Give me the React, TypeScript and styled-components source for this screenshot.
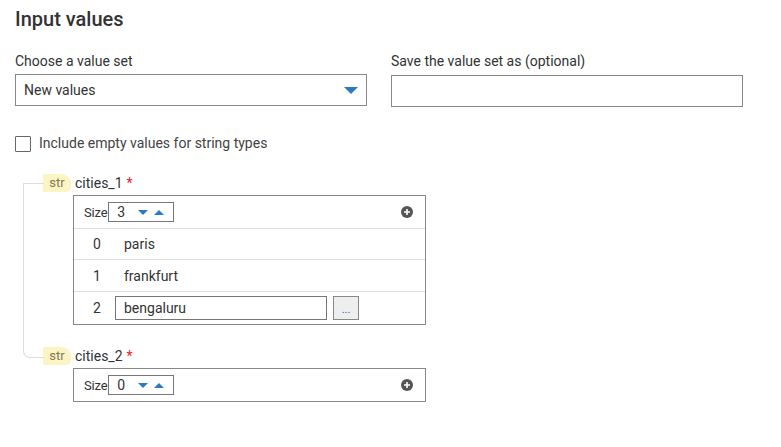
import React from "react";
import styled, { createGlobalStyle, css } from "styled-components";

const GlobalStyle = createGlobalStyle`
  html, body { margin: 0; padding: 0; background: #fff; }
  body { font-family: Roboto, "Liberation Sans", sans-serif; color: #333; }
  * { box-sizing: border-box; }
`;

const Page = styled.div`
  padding: 0 15px;
  width: 781px;
`;

const Title = styled.h1`
  margin: 0;
  padding-top: 7px;
  font-size: 20px;
  line-height: 24px;
  font-weight: 500;
  color: #333;
`;

const FormRow = styled.div`
  display: grid;
  grid-template-columns: 352px 352px;
  column-gap: 24px;
  margin-top: 20px;
`;

const Field = styled.div`
  display: flex;
  flex-direction: column;
`;

const Label = styled.label`
  font-size: 14px;
  line-height: 20px;
  color: #333;
  margin-bottom: 3px;
`;

const SelectBox = styled.div`
  height: 32px;
  border: 1px solid #888;
  display: flex;
  align-items: center;
  padding: 0 8px 0 8px;
  font-size: 14px;
  color: #333;
  justify-content: space-between;
`;

const TextBox = styled.div`
  height: 32px;
  margin-top: 1px;
  border: 1px solid #888;
`;

const CheckRow = styled.div`
  display: flex;
  align-items: flex-start;
  height: 20px;
  margin-top: 26px;
  gap: 8px;
  font-size: 14px;
  line-height: 20px;
  color: #444;
`;

const CheckBox = styled.span`
  width: 16px;
  height: 16px;
  margin-top: 3px;
  border: 1px solid #666;
  border-radius: 1px;
  background: #fff;
`;

const Tree = styled.div`
  margin-top: 21px;
  margin-left: 8px;
`;

const TreeItem = styled.div<{ $last?: boolean }>`
  position: relative;
  padding-left: 20px;
  padding-bottom: ${(p) => (p.$last ? 0 : 22)}px;
  &::before {
    content: "";
    position: absolute;
    left: 0;
    width: 20px;
    border-left: 1px solid #ddd;
    ${(p) =>
      p.$last
        ? css`
            top: 0;
            height: 10px;
            border-bottom: 1px solid #ddd;
            border-bottom-left-radius: 7px;
          `
        : css`
            top: 9px;
            bottom: 0;
            border-top: 1px solid #ddd;
          `}
  }
`;

const ItemHeader = styled.div`
  display: flex;
  align-items: center;
  height: 18px;
  gap: 4px;
`;

const TypeBadge = styled.span`
  width: 28px;
  height: 18px;
  background: #fdf4c4;
  color: #85775a;
  font-size: 13px;
  line-height: 18px;
  text-align: center;
  border-radius: 0 9px 5px 0;
`;

const ItemName = styled.span`
  font-size: 14px;
  line-height: 16px;
  color: #333;
`;

const Required = styled.span`
  color: #e8202a;
  margin-left: 4px;
`;

const ListBox = styled.div`
  margin-left: 30px;
  margin-top: 3px;
  width: 353px;
  border: 1px solid #888;
`;

const SizeRow = styled.div`
  display: flex;
  align-items: center;
  height: 32px;
  padding: 0 12px 0 10px;
`;

const SizeLabel = styled.span`
  font-size: 13px;
  color: #333;
  letter-spacing: -0.2px;
`;

const SizeInput = styled.div`
  display: flex;
  align-items: center;
  width: 66px;
  height: 20px;
  margin-left: 1px;
  border: 1px solid #777;
  padding: 0 8px;
  font-size: 14px;
  color: #333;
`;

const SizeValue = styled.span`
  flex: 1;
`;

const Spinner = styled.span`
  display: flex;
  align-items: center;
  gap: 6px;
  margin-right: 1px;
`;

const AddButton = styled.span`
  margin-left: auto;
  display: flex;
`;

const Row = styled.div<{ $h: number }>`
  display: flex;
  align-items: center;
  height: ${(p) => p.$h}px;
  border-top: 1px solid #ddd;
`;

const Index = styled.span`
  width: 41px;
  padding-left: 5px;
  text-align: center;
  font-size: 14px;
  color: #333;
`;

const Value = styled.span`
  padding-left: 9px;
  font-size: 14px;
  color: #333;
`;

const ValueInput = styled.div`
  width: 212px;
  height: 24px;
  border: 1px solid #777;
  padding: 0 8px;
  display: flex;
  align-items: center;
  font-size: 14px;
  color: #333;
`;

const MoreButton = styled.span`
  width: 26px;
  height: 24px;
  margin-left: 6px;
  background: #eee;
  border: 1px solid #888;
  font-size: 11px;
  color: #2a5d9e;
  text-align: center;
  line-height: 26px;
`;

const Caret = ({ w, h, up }: { w: number; h: number; up?: boolean }) => (
  <svg width={w} height={h} viewBox={`0 0 ${w} ${h}`}>
    <polygon
      points={up ? `0,${h} ${w},${h} ${w / 2},0` : `0,0 ${w},0 ${w / 2},${h}`}
      fill="#2b79c2"
    />
  </svg>
);

const PlusCircle = () => (
  <svg width="12" height="12" viewBox="0 0 12 12">
    <circle cx="6" cy="6" r="6" fill="#555" />
    <path d="M6 3v6M3 6h6" stroke="#fff" strokeWidth="1.6" />
  </svg>
);

type Item = { name: string; values: string[]; editing?: number };

const items: Item[] = [
  { name: "cities_1", values: ["paris", "frankfurt", "bengaluru"], editing: 2 },
  { name: "cities_2", values: [] },
];

const rowHeights = [31, 32, 33];

export default function App() {
  return (
    <>
      <GlobalStyle />
      <Page>
        <Title>Input values</Title>
        <FormRow>
          <Field>
            <Label>Choose a value set</Label>
            <SelectBox>
              <span>New values</span>
              <Caret w={14} h={7} />
            </SelectBox>
          </Field>
          <Field>
            <Label>Save the value set as (optional)</Label>
            <TextBox />
          </Field>
        </FormRow>
        <CheckRow>
          <CheckBox />
          <span>Include empty values for string types</span>
        </CheckRow>
        <Tree>
          {items.map((item, i) => (
            <TreeItem key={item.name} $last={i === items.length - 1}>
              <ItemHeader>
                <TypeBadge>str</TypeBadge>
                <ItemName>
                  {item.name}
                  <Required>*</Required>
                </ItemName>
              </ItemHeader>
              <ListBox>
                <SizeRow>
                  <SizeLabel>Size</SizeLabel>
                  <SizeInput>
                    <SizeValue>{item.values.length}</SizeValue>
                    <Spinner>
                      <Caret w={10} h={5} />
                      <Caret w={10} h={5} up />
                    </Spinner>
                  </SizeInput>
                  <AddButton>
                    <PlusCircle />
                  </AddButton>
                </SizeRow>
                {item.values.map((v, j) => (
                  <Row key={j} $h={rowHeights[j] ?? 32}>
                    <Index>{j}</Index>
                    {item.editing === j ? (
                      <>
                        <ValueInput>{v}</ValueInput>
                        <MoreButton>...</MoreButton>
                      </>
                    ) : (
                      <Value>{v}</Value>
                    )}
                  </Row>
                ))}
              </ListBox>
            </TreeItem>
          ))}
        </Tree>
      </Page>
    </>
  );
}
